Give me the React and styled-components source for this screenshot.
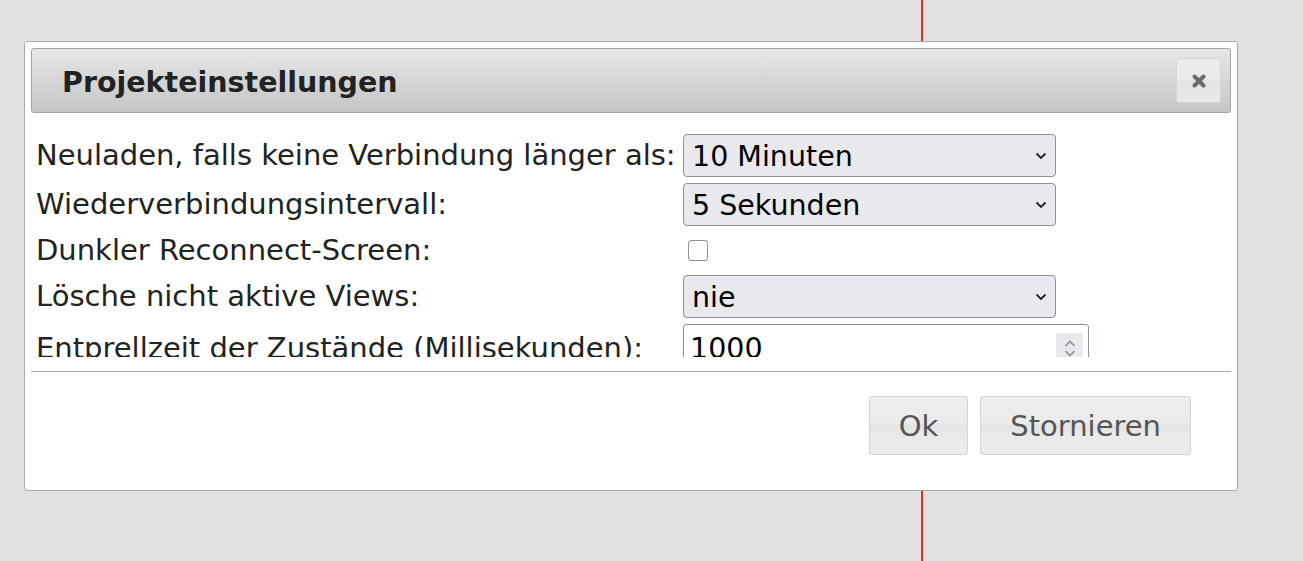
import React from "react";
import styled, { createGlobalStyle } from "styled-components";

const GlobalStyle = createGlobalStyle`
  html, body {
    height: 100%;
  }
  body {
    margin: 0;
    background-color: #e1e1e1;
    background-image: linear-gradient(
      to right,
      transparent 921px,
      #3f8a35 921px,
      #3f8a35 922px,
      #dc2424 922px,
      #dc2424 923px,
      transparent 923px
    );
    font-family: "DejaVu Sans", Verdana, sans-serif;
    overflow: hidden;
  }
`;

const Dialog = styled.div`
  box-sizing: border-box;
  width: 1214px;
  height: 450px;
  margin: 41px 0 0 24px;
  padding: 6px;
  background: #fff;
  border: 1px solid #aaa;
  border-radius: 3px;
  display: flex;
  flex-direction: column;
`;

const TitleBar = styled.div`
  box-sizing: border-box;
  height: 65px;
  flex: none;
  display: flex;
  align-items: center;
  justify-content: space-between;
  padding: 0 9px 0 30px;
  border: 1px solid #a4a4a4;
  border-radius: 3px;
  background: linear-gradient(#e6e6e6, #c6c6c6);
`;

const Title = styled.span`
  font-size: 28.5px;
  font-weight: bold;
  color: #222;
  padding-top: 4px;
`;

const CloseButton = styled.button`
  box-sizing: border-box;
  width: 45px;
  height: 45px;
  padding: 0;
  display: flex;
  align-items: center;
  justify-content: center;
  border: 1px solid #d6d6d6;
  border-radius: 3px;
  background: linear-gradient(#ececec 0%, #e9e9e9 48%, #e3e3e3 52%, #eaeaea 100%);
  cursor: pointer;
`;

const Content = styled.div`
  height: 244px;
  flex: none;
  overflow: hidden;
  padding: 18px 0 0 5px;
  box-sizing: border-box;
`;

const Form = styled.div`
  display: grid;
  grid-template-columns: 647px auto;
  align-items: center;
`;

const Label = styled.label`
  font-size: 29px;
  line-height: 37px;
  padding: 3px 0;
  color: #222;
  white-space: nowrap;
`;

const Cell = styled.div`
  padding: 3px 0;
  display: flex;
  align-items: center;
`;

const SelectWrap = styled.div`
  position: relative;
  width: 373px;
`;

const Select = styled.select`
  appearance: none;
  box-sizing: border-box;
  width: 100%;
  height: 43px;
  margin: 0;
  padding: 2px 30px 0 8px;
  font-family: "DejaVu Sans", Verdana, sans-serif;
  font-size: 28.5px;
  color: #000;
  background: #e9e9ed;
  border: 1px solid #8f8f9d;
  border-radius: 4px;
  outline: none;
`;

const Chevron = styled.svg`
  position: absolute;
  right: 9px;
  top: 50%;
  margin-top: -4px;
  pointer-events: none;
`;

const Checkbox = styled.input`
  appearance: none;
  box-sizing: border-box;
  width: 20px;
  height: 21px;
  margin: 0 0 0 5px;
  border: 1px solid #8f8f9d;
  border-radius: 3px;
  background: #fff;
`;

const NumberWrap = styled.div`
  position: relative;
  width: 406px;
`;

const NumberInput = styled.input`
  appearance: textfield;
  -moz-appearance: textfield;
  box-sizing: border-box;
  width: 100%;
  height: 49px;
  margin: 0;
  padding: 0 40px 0 6px;
  font-family: "DejaVu Sans", Verdana, sans-serif;
  font-size: 28.5px;
  color: #000;
  background: #fff;
  border: 1px solid #8f8f9d;
  border-radius: 3px;
  outline: none;
  &::-webkit-outer-spin-button,
  &::-webkit-inner-spin-button {
    -webkit-appearance: none;
    margin: 0;
  }
`;

const Spinner = styled.div`
  position: absolute;
  right: 6px;
  top: 9px;
  width: 27px;
  height: 31px;
  background: #e9e9ed;
  display: flex;
  flex-direction: column;
  align-items: center;
  justify-content: center;
  gap: 3px;
  pointer-events: none;
`;

const ButtonPane = styled.div`
  margin-top: 14px;
  border-top: 1px solid #aaa;
  padding: 24px 40px 0 0;
  display: flex;
  justify-content: flex-end;
  gap: 12px;
`;

const Button = styled.button`
  box-sizing: border-box;
  height: 59px;
  padding: 0 29px;
  font-family: "DejaVu Sans", Verdana, sans-serif;
  font-size: 29px;
  color: #555;
  border: 1px solid #d3d3d3;
  border-radius: 3px;
  background: linear-gradient(
    #ededed 0%,
    #ebebeb 45%,
    #e3e3e3 52%,
    #e9e9e9 62%,
    #ececec 100%
  );
  cursor: pointer;
`;

const ChevronDown = () => (
  <Chevron width="12" height="8" viewBox="0 0 12 8">
    <path d="M1.5 1.5 L6 6 L10.5 1.5" fill="none" stroke="#222" strokeWidth="1.8" />
  </Chevron>
);

const SelectField = ({ value, options }) => (
  <SelectWrap>
    <Select defaultValue={value}>
      {options.map((o) => (
        <option key={o}>{o}</option>
      ))}
    </Select>
    <ChevronDown />
  </SelectWrap>
);

const App = () => {
  return (
    <>
      <GlobalStyle />
      <Dialog>
        <TitleBar>
          <Title>Projekteinstellungen</Title>
          <CloseButton aria-label="close">
            <svg width="16" height="16" viewBox="0 0 16 16">
              <path d="M3.5 3.5 L12.5 12.5 M12.5 3.5 L3.5 12.5" stroke="#6b6b6b" strokeWidth="4" strokeLinecap="round" />
            </svg>
          </CloseButton>
        </TitleBar>

        <Content>
          <Form>
            <Label>Neuladen, falls keine Verbindung länger als:</Label>
            <Cell>
              <SelectField value="10 Minuten" options={["1 Minute", "5 Minuten", "10 Minuten", "nie"]} />
            </Cell>

            <Label>Wiederverbindungsintervall:</Label>
            <Cell>
              <SelectField value="5 Sekunden" options={["1 Sekunde", "5 Sekunden", "10 Sekunden"]} />
            </Cell>

            <Label>Dunkler Reconnect-Screen:</Label>
            <Cell>
              <Checkbox type="checkbox" />
            </Cell>

            <Label>Lösche nicht aktive Views:</Label>
            <Cell>
              <SelectField value="nie" options={["nie", "nach 1 Minute", "nach 10 Minuten"]} />
            </Cell>

            <Label>Entprellzeit der Zustände (Millisekunden):</Label>
            <Cell>
              <NumberWrap>
                <NumberInput type="number" defaultValue="1000" />
                <Spinner>
                  <svg width="12" height="7" viewBox="0 0 12 7">
                    <path d="M1.5 6 L6 1.5 L10.5 6" fill="none" stroke="#8f8f9d" strokeWidth="1.6" />
                  </svg>
                  <svg width="12" height="7" viewBox="0 0 12 7">
                    <path d="M1.5 1 L6 5.5 L10.5 1" fill="none" stroke="#8f8f9d" strokeWidth="1.6" />
                  </svg>
                </Spinner>
              </NumberWrap>
            </Cell>
          </Form>
        </Content>

        <ButtonPane>
          <Button>Ok</Button>
          <Button>Stornieren</Button>
        </ButtonPane>
      </Dialog>
    </>
  );
};

export default App;
